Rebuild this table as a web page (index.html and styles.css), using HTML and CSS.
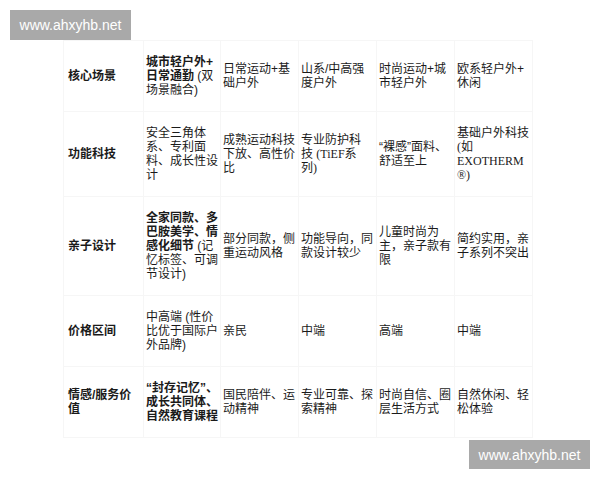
FILE: index.html
```html
<!DOCTYPE html>
<html lang="zh-CN">
<head>
<meta charset="utf-8">
<title>品牌对比</title>
<link rel="stylesheet" href="styles.css">
</head>
<body>
<div class="page">
  <table class="compare">
    <colgroup>
      <col class="c-label"><col class="c-main"><col class="c-b"><col class="c-b"><col class="c-b"><col class="c-b">
    </colgroup>
    <tbody>
      <tr>
        <th>核心场景</th>
        <td><b>城市轻户外+<br>日常通勤</b> (双<br>场景融合)</td>
        <td>日常运动+基<br>础户外</td>
        <td>山系/中高强<br>度户外</td>
        <td>时尚运动+城<br>市轻户外</td>
        <td>欧系轻户外+<br>休闲</td>
      </tr>
      <tr>
        <th>功能科技</th>
        <td>安全三角体<br>系、专利面<br>料、成长性设<br>计</td>
        <td>成熟运动科技<br>下放、高性价<br>比</td>
        <td>专业防护科<br>技 <span class="serif">(TiEF</span>系<br><span class="serif">列)</span></td>
        <td>“裸感”面料、<br>舒适至上</td>
        <td>基础户外科技<br><span class="serif">(</span>如<br><span class="serif">EXOTHERM<br>®)</span></td>
      </tr>
      <tr>
        <th>亲子设计</th>
        <td><b>全家同款、多<br>巴胺美学、情<br>感化细节</b> (记<br>忆标签、可调<br>节设计)</td>
        <td>部分同款，侧<br>重运动风格</td>
        <td>功能导向，同<br>款设计较少</td>
        <td>儿童时尚为<br>主，亲子款有<br>限</td>
        <td>简约实用，亲<br>子系列不突出</td>
      </tr>
      <tr>
        <th>价格区间</th>
        <td>中高端 (性价<br>比优于国际户<br>外品牌)</td>
        <td>亲民</td>
        <td>中端</td>
        <td>高端</td>
        <td>中端</td>
      </tr>
      <tr>
        <th>情感/服务价<br>值</th>
        <td><b>“封存记忆”、<br>成长共同体、<br>自然教育课程</b></td>
        <td>国民陪伴、运<br>动精神</td>
        <td>专业可靠、探<br>索精神</td>
        <td>时尚自信、圈<br>层生活方式</td>
        <td>自然休闲、轻<br>松体验</td>
      </tr>
    </tbody>
  </table>
  <div class="mark mark-top">www.ahxyhb.net</div>
  <div class="mark mark-bottom">www.ahxyhb.net</div>
</div>
</body>
</html>
```
FILE: styles.css
```css
html, body {
  margin: 0;
  padding: 0;
  background: #ffffff;
}

.page {
  position: relative;
  width: 600px;
  height: 480px;
  overflow: hidden;
  padding-top: 40px;
  padding-left: 63px;
  box-sizing: border-box;
  font-family: "Liberation Sans", "Noto Sans CJK SC", sans-serif;
  color: #1a1a1a;
}

.compare {
  border-collapse: collapse;
  table-layout: fixed;
  width: 469px;
  font-size: 12px;
  line-height: 14px;
}

.c-label { width: 80px; }
.c-main { width: 77px; }
.c-b { width: 78px; }

.compare th,
.compare td {
  border: 1px solid #f6f6f6;
  padding: 14px 2px;
  vertical-align: middle;
  text-align: left;
  white-space: nowrap;
}

.compare th {
  font-weight: bold;
  padding-left: 4px;
}

.compare b {
  font-weight: bold;
}

.serif {
  font-family: "Liberation Serif", "Noto Sans CJK SC", serif;
  font-size: 12px;
}

.mark {
  position: absolute;
  width: 121px;
  height: 30px;
  background: #a9a9a9;
  color: #ffffff;
  font-family: "Liberation Sans", Arial, sans-serif;
  font-size: 14px;
  display: flex;
  align-items: center;
  justify-content: center;
}

.mark-top {
  left: 10px;
  top: 10px;
}

.mark-bottom {
  left: 469px;
  top: 440px;
  height: 29px;
}
```
